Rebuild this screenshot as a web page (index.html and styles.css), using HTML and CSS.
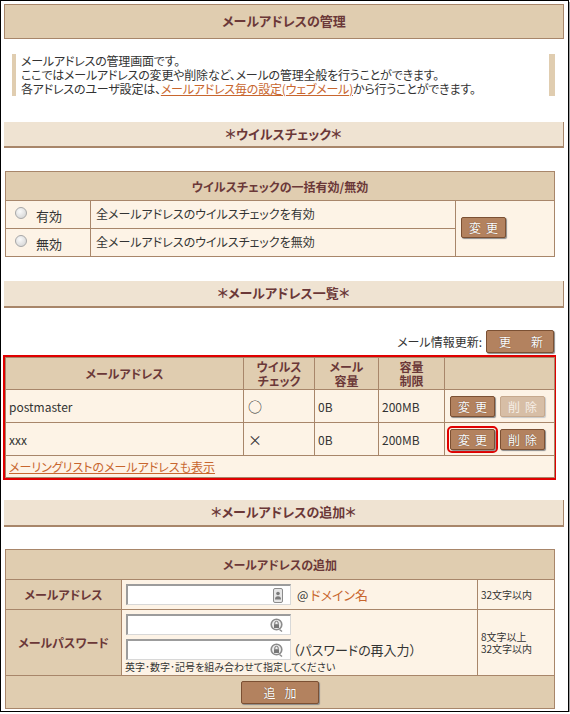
FILE: index.html
```html
<!DOCTYPE html>
<html lang="ja">
<head>
<meta charset="utf-8">
<title>メールアドレスの管理</title>
<link rel="stylesheet" href="styles.css">
</head>
<body>
<div class="frame">
  <div class="title">メールアドレスの管理</div>
  <div class="intro">メールアドレスの管理画面です。<br>ここではメールアドレスの変更や削除など、メールの管理全般を行うことができます。<br>各アドレスのユーザ設定は、<a class="link" href="#">メールアドレス毎の設定(ウェブメール)</a>から行うことができます。</div>

  <div class="section s1">＊ウイルスチェック＊</div>
  <table class="grid virus">
    <colgroup><col class="c1"><col class="c2"><col class="c3"></colgroup>
    <tr class="hrow"><th colspan="3">ウイルスチェックの一括有効/無効</th></tr>
    <tr class="vrow">
      <td class="opt"><span class="radio"></span><span class="optlbl">有効</span></td>
      <td>全メールアドレスのウイルスチェックを有効</td>
      <td rowspan="2" class="btncell"><span class="btn sm">変更</span></td>
    </tr>
    <tr class="vrow">
      <td class="opt"><span class="radio"></span><span class="optlbl">無効</span></td>
      <td>全メールアドレスのウイルスチェックを無効</td>
    </tr>
  </table>

  <div class="section s2">＊メールアドレス一覧＊</div>
  <div class="update"><span>メール情報更新:</span><span class="btn wide">更新</span></div>
  <div class="redbox">
    <table class="grid list">
      <colgroup><col class="l1"><col class="l2"><col class="l3"><col class="l4"><col class="l5"></colgroup>
      <tr class="lhead"><th>メールアドレス</th><th>ウイルス<br>チェック</th><th>メール<br>容量</th><th>容量<br>制限</th><th></th></tr>
      <tr class="lrow">
        <td>postmaster</td><td class="mark">○</td><td>0B</td><td>200MB</td>
        <td class="acts"><span class="btn sm">変更</span><span class="btn sm off">削除</span></td>
      </tr>
      <tr class="lrow">
        <td>xxx</td><td class="mark">×</td><td>0B</td><td>200MB</td>
        <td class="acts"><span class="hl"><span class="btn sm">変更</span></span><span class="btn sm">削除</span></td>
      </tr>
      <tr class="linkrow"><td colspan="5"><a class="link" href="#">メーリングリストのメールアドレスも表示</a></td></tr>
    </table>
  </div>

  <div class="section s3">＊メールアドレスの追加＊</div>
  <table class="grid add">
    <colgroup><col class="a1"><col class="a2"><col class="a3"></colgroup>
    <tr class="hrow"><th colspan="3">メールアドレスの追加</th></tr>
    <tr class="arow1">
      <th class="lbl">メールアドレス</th>
      <td class="fcell">
        <div class="line">
          <span class="field">
            <svg width="10" height="15" viewBox="0 0 10 15"><rect x="0.5" y="0.5" width="9" height="14" rx="1.5" fill="#e6e6e6" stroke="#8c8c8c"/><circle cx="5" cy="5.5" r="1.8" fill="#7a7a7a"/><path d="M2 11.5 Q2 8.3 5 8.3 Q8 8.3 8 11.5 Z" fill="#7a7a7a"/></svg>
          </span>
          <span class="at">@<span class="dom">ドメイン名</span></span>
        </div>
      </td>
      <td class="note">32文字以内</td>
    </tr>
    <tr class="arow2">
      <th class="lbl">メールパスワード</th>
      <td class="fcell pw">
        <div class="line">
          <span class="field">
            <svg width="13" height="14" viewBox="0 0 13 14"><circle cx="6.5" cy="6.5" r="5.3" fill="#eee" stroke="#8c8c8c" stroke-width="1.6"/><path d="M4.8 6.3 V5 A1.7 1.7 0 0 1 8.2 5 V6.3" fill="none" stroke="#777" stroke-width="1"/><rect x="4" y="6.2" width="5" height="3.8" fill="#777"/><path d="M9.5 11.5 L12 13.5" stroke="#8c8c8c" stroke-width="1.4"/></svg>
          </span>
        </div>
        <div class="line l2">
          <span class="field">
            <svg width="13" height="14" viewBox="0 0 13 14"><circle cx="6.5" cy="6.5" r="5.3" fill="#eee" stroke="#8c8c8c" stroke-width="1.6"/><path d="M4.8 6.3 V5 A1.7 1.7 0 0 1 8.2 5 V6.3" fill="none" stroke="#777" stroke-width="1"/><rect x="4" y="6.2" width="5" height="3.8" fill="#777"/><path d="M9.5 11.5 L12 13.5" stroke="#8c8c8c" stroke-width="1.4"/></svg>
          </span>
          <span class="re">（パスワードの再入力）</span>
        </div>
        <div class="hint">英字･数字･記号を組み合わせて指定してください</div>
      </td>
      <td class="note">8文字以上<br>32文字以内</td>
    </tr>
    <tr class="brow"><td colspan="3"><span class="btn addbtn">追加</span></td></tr>
  </table>
</div>
</body>
</html>
```

FILE: styles.css
```css
* { box-sizing: border-box; }
body {
  margin: 0;
  font-family: "Noto Sans CJK JP", "Liberation Sans", sans-serif;
  font-size: 12px;
  color: #333;
  font-feature-settings: "palt";
  background: #fff;
}
.frame {
  width: 569px;
  height: 712px;
  border: 1px solid #000;
  padding: 3px 4px 0 3px;
  box-shadow: 1px 2px 0 #a0a0a0;
}
.title {
  height: 35px;
  background: #e0cdb0;
  border: 1px solid #a8866a;
  text-align: center;
  line-height: 32px;
  font-size: 13px;
  font-weight: bold;
  color: #6b3838;
}
.intro {
  margin: 15px 9px 0 8px;
  height: 42px;
  border-left: 4px solid #e0cdb0;
  border-right: 6px solid #e0cdb0;
  padding: 0 0 0 5px;
  line-height: 14px;
  letter-spacing: -0.2px;
}
.link { color: #c8662e; text-decoration: underline; }
.section {
  margin-top: 26px;
  height: 26px;
  background: #efe3d2;
  border-bottom: 2px solid #a8866a;
  border-right: 1px solid #a8866a;
  text-align: center;
  font-weight: bold;
  font-size: 13px;
  color: #6b3838;
  line-height: 24px;
}
.section.s1 { margin-top: 26px; }
.section.s2 { margin-top: 24px; height: 27px; }
.section.s3 { margin-top: 20px; height: 27px; }

.grid {
  border-collapse: collapse;
  table-layout: fixed;
  width: 549px;
  margin-left: 1px;
  background: #fdf3e6;
}
.grid td, .grid th {
  border: 1px solid #a8866a;
  padding: 0 0 0 5px;
  line-height: 13px;
  vertical-align: middle;
  text-align: left;
  font-weight: normal;
}
.grid th {
  background: #e0cdb0;
  color: #6b3838;
  font-weight: bold;
  text-align: center;
  padding: 0;
}
.virus { margin-top: 23px; }
.virus .c1 { width: 85px; }
.virus .c2 { width: 365px; }
.virus .c3 { width: 99px; }
.virus .hrow { height: 29px; }
.virus .vrow { height: 28px; }
.virus .vrow td { padding-bottom: 2px; }
.opt { white-space: nowrap; }
.radio {
  display: inline-block;
  width: 12px;
  height: 12px;
  border-radius: 50%;
  border: 1px solid #a8a8a8;
  background: radial-gradient(circle at 40% 35%, #fafafa 0%, #e2e2e2 55%, #cfcfcf 100%);
  vertical-align: -1px;
  margin-left: 4px;
}
.optlbl { margin-left: 9px; font-size: 13px; vertical-align: -3px; }
.btncell { padding-left: 5px !important; }

.btn {
  display: inline-block;
  background: #b3825f;
  border: 1px solid #7b5033;
  border-radius: 2px;
  color: #fff;
  text-align: center;
  box-shadow: 1px 1px 1px #8a8a8a;
  font-size: 12px;
  text-shadow: 0 0 1px #5a3a24;
  vertical-align: middle;
  white-space: nowrap;
}
.btn.sm { width: 45px; height: 21px; line-height: 19px; letter-spacing: 5px; text-indent: 5px; }
.btn.wide { width: 68px; height: 23px; line-height: 21px; letter-spacing: 20px; text-align: left; padding-left: 12px; }
.btn.addbtn { width: 78px; height: 23px; line-height: 21px; letter-spacing: 9px; text-indent: 9px; }
.btn.off {
  background: #d7bea6;
  border-color: #c6a98e;
  color: #f6eee6;
  text-shadow: none;
  box-shadow: 1px 1px 1px #c8c8c8;
}

.update {
  margin-top: 22px;
  height: 23px;
  display: flex;
  justify-content: flex-end;
  align-items: center;
  gap: 4px;
  padding-right: 10px;
  font-size: 12px;
}
.redbox {
  margin-top: 2px;
  margin-left: -1px;
  width: 553px;
  border: 2px solid #e00000;
}
.redbox .grid { margin-left: 0; }
.list .l1 { width: 238px; }
.list .l2 { width: 71px; }
.list .l3 { width: 64px; }
.list .l4 { width: 66px; }
.list .l5 { width: 110px; }
.list .lhead { height: 32px; }
.list .lhead th { line-height: 14px; }
.list .lrow { height: 33px; }
.list .lrow td { padding-left: 3px; }
.list .lrow td.mark { padding-left: 4px; font-size: 14px; }
.list .lrow td.acts { padding-left: 5px; white-space: nowrap; }
.acts .btn + .btn { margin-left: 5px; }
.hl {
  display: inline-block;
  border: 2px solid #e00000;
  border-radius: 5px;
  padding: 1px;
  margin: -3px -3px -3px -3px;
  vertical-align: middle;
}
.hl + .btn { margin-left: 5px; }
.list .linkrow { height: 22px; }
.list .linkrow td { padding-left: 3px; }

.add { margin-top: 22px; }
.add .a1 { width: 116px; }
.add .a2 { width: 356px; }
.add .a3 { width: 77px; }
.add .hrow { height: 30px; }
.add .arow1 { height: 30px; }
.add .arow2 { height: 66px; }
.add .brow { height: 33px; }
.add th.lbl { font-size: 12px; }
.fcell { padding-left: 4px !important; }
.line { display: flex; align-items: center; height: 21px; }
.line.l2 { margin-top: 4px; }
.pw { vertical-align: top !important; padding-top: 4px !important; }
.field {
  display: inline-flex;
  justify-content: flex-end;
  align-items: center;
  width: 165px;
  height: 21px;
  background: #fff;
  border-style: solid;
  border-width: 2px 1px 1px 2px;
  border-color: #9c9c9c #d8d8d8 #d8d8d8 #9c9c9c;
  padding-right: 7px;
}
.at { margin-left: 6px; font-size: 12px; }
.dom { color: #c8662e; font-size: 13px; margin-left: 2px; }
.re { margin-left: 2px; font-size: 13px; }
.hint { font-size: 10px; line-height: 12px; margin-left: -1px; margin-top: 1px; }
.note { font-size: 10px; padding-left: 3px !important; line-height: 12px !important; }
.brow td { background: #e0cdb0; text-align: center !important; padding: 0 !important; }
```
